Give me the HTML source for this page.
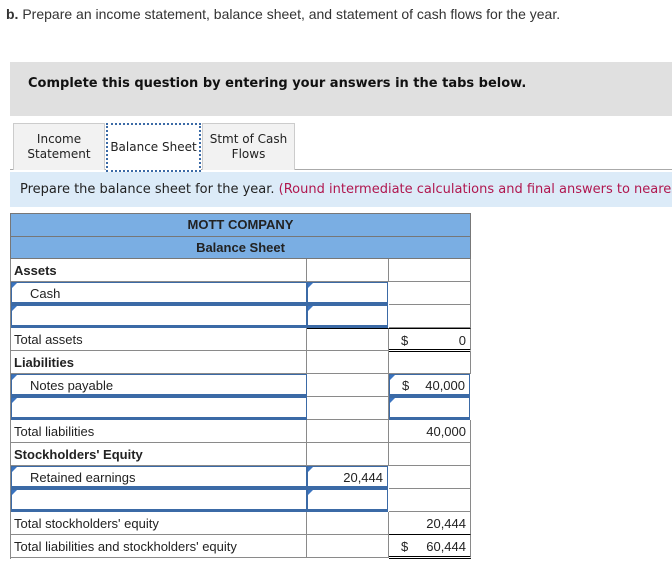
<!DOCTYPE html>
<html><head><style>
body{margin:0;width:672px;height:563px;overflow:hidden;background:#fff;position:relative;font-family:"Liberation Sans",Arial,sans-serif;}
.a{position:absolute;box-sizing:border-box;}
.v{font-family:"DejaVu Sans",Verdana,sans-serif;}
.c{position:absolute;box-sizing:border-box;border-right:1px solid #8a8a8a;border-bottom:1px solid #8a8a8a;height:23px;font-size:13px;line-height:23px;color:#222;white-space:nowrap;}
.in{position:absolute;box-sizing:border-box;border:1px solid #3b6aa6;border-bottom:3px solid #3b6aa6;height:23px;font-size:13px;line-height:21px;color:#222;}
.in:before{content:"";position:absolute;left:0;top:0;border-left:5px solid #3b74c0;border-bottom:5px solid transparent;}
.r{text-align:right;padding-right:4px;}
.dbl{border-bottom:3px double #000;}
</style></head><body>
<div class="a" style="left:6px;top:6px;font-size:14px;color:#333;white-space:nowrap;"><b>b.</b> Prepare an income statement, balance sheet, and statement of cash flows for the year.</div>
<div class="a" style="left:10px;top:62px;width:662px;height:54px;background:#e0e0e0;"></div>
<div class="a v" style="left:28px;top:76px;font-size:13px;font-weight:bold;color:#111;white-space:nowrap;">Complete this question by entering your answers in the tabs below.</div>
<div class="a" style="left:10px;top:169px;width:662px;height:1px;background:#aaa;"></div>
<div class="a v" style="left:13px;top:123px;width:92px;height:47px;background:#f2f2f2;border:1px solid #ccc;border-bottom:none;font-size:12px;text-align:center;padding-top:8px;line-height:15px;color:#222;">Income<br>Statement</div>
<div class="a v" style="left:106px;top:123px;width:95px;height:49px;background:#fff;border:2px dotted #3b6aa6;font-size:12px;text-align:center;padding-top:15px;color:#222;">Balance Sheet</div>
<div class="a v" style="left:202px;top:123px;width:93px;height:47px;background:#f2f2f2;border:1px solid #ccc;border-bottom:none;font-size:12px;text-align:center;padding-top:8px;line-height:15px;color:#222;">Stmt of Cash<br>Flows</div>
<div class="a v" style="left:10px;top:172px;width:662px;height:35px;overflow:hidden;background:#dcebf8;font-size:13px;line-height:35px;padding-left:10px;white-space:nowrap;color:#222;">Prepare the balance sheet for the year. <span style="color:#b0174f;">(Round intermediate calculations and final answers to nearest dollar amount.)</span></div>
<div class="a" style="left:10px;top:213px;width:461px;height:46px;background:#7aaee3;border:1px solid #777;"></div>
<div class="a" style="left:10px;top:236px;width:461px;height:1px;background:#777;"></div>
<div class="a" style="left:10px;top:213px;width:461px;height:23px;line-height:24px;text-align:center;font-size:13px;font-weight:bold;color:#222;">MOTT COMPANY</div>
<div class="a" style="left:10px;top:236px;width:461px;height:23px;line-height:24px;text-align:center;font-size:13px;font-weight:bold;color:#222;">Balance Sheet</div>
<div class="a" style="left:10px;top:259px;width:1px;height:300px;background:#8a8a8a;"></div>

<div class="c" style="left:10px;top:259px;width:297px;padding-left:4px;font-weight:bold;">Assets</div><div class="c" style="left:307px;top:259px;width:82px;"></div><div class="c" style="left:389px;top:259px;width:82px;"></div>
<div class="in" style="left:11px;top:282px;width:296px;padding-left:18px;">Cash</div><div class="in" style="left:307px;top:282px;width:81px;"></div><div class="c" style="left:389px;top:282px;width:82px;"></div>
<div class="in" style="left:11px;top:305px;width:296px;"></div><div class="in" style="left:307px;top:305px;width:81px;"></div><div class="c" style="left:389px;top:305px;width:82px;"></div>
<div class="c" style="left:10px;top:328px;width:297px;padding-left:4px;">Total assets</div><div class="c" style="left:307px;top:328px;width:82px;border-top:1px solid #000;"></div><div class="c dbl r" style="left:389px;top:328px;width:82px;height:24px;border-top:1px solid #000;"><span style="float:left;padding-left:12px;">$</span>0</div>
<div class="c" style="left:10px;top:351px;width:297px;padding-left:4px;font-weight:bold;">Liabilities</div><div class="c" style="left:307px;top:351px;width:82px;"></div><div class="c" style="left:389px;top:351px;width:82px;"></div>
<div class="in" style="left:11px;top:374px;width:296px;padding-left:18px;">Notes payable</div><div class="c" style="left:307px;top:374px;width:82px;"></div><div class="in r" style="left:389px;top:374px;width:81px;"><span style="float:left;padding-left:12px;">$</span>40,000</div>
<div class="in" style="left:11px;top:397px;width:296px;"></div><div class="c" style="left:307px;top:397px;width:82px;"></div><div class="in" style="left:389px;top:397px;width:81px;"></div>
<div class="c" style="left:10px;top:420px;width:297px;padding-left:4px;">Total liabilities</div><div class="c" style="left:307px;top:420px;width:82px;"></div><div class="c r" style="left:389px;top:420px;width:82px;">40,000</div>
<div class="c" style="left:10px;top:443px;width:297px;padding-left:4px;font-weight:bold;">Stockholders' Equity</div><div class="c" style="left:307px;top:443px;width:82px;"></div><div class="c" style="left:389px;top:443px;width:82px;"></div>
<div class="in" style="left:11px;top:466px;width:296px;padding-left:18px;">Retained earnings</div><div class="in r" style="left:307px;top:466px;width:81px;">20,444</div><div class="c" style="left:389px;top:466px;width:82px;"></div>
<div class="in" style="left:11px;top:489px;width:296px;"></div><div class="in" style="left:307px;top:489px;width:81px;"></div><div class="c" style="left:389px;top:489px;width:82px;"></div>
<div class="c" style="left:10px;top:512px;width:297px;padding-left:4px;">Total stockholders' equity</div><div class="c" style="left:307px;top:512px;width:82px;"></div><div class="c r" style="left:389px;top:512px;width:82px;border-bottom:1px solid #000;">20,444</div>
<div class="c" style="left:10px;top:535px;width:297px;padding-left:4px;">Total liabilities and stockholders' equity</div><div class="c" style="left:307px;top:535px;width:82px;"></div><div class="c dbl r" style="left:389px;top:535px;width:82px;height:24px;"><span style="float:left;padding-left:12px;">$</span>60,444</div>
</body></html>
